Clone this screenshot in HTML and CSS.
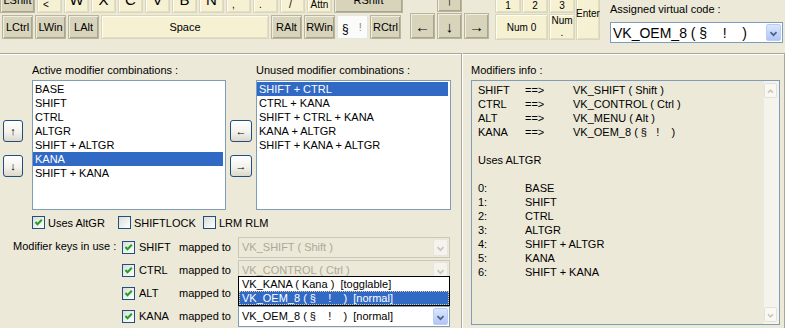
FILE: index.html
```html
<!DOCTYPE html>
<html>
<head>
<meta charset="utf-8">
<title>Modifiers</title>
<link rel="stylesheet" href="styles.css">
</head>
<body>
<div class="top">
  <div class="kb-main">
    <div class="krow r1">
      <div class="key dk w35">LShift</div>
      <div class="key lt sub">&lt;</div>
      <div class="key lt big">W</div>
      <div class="key lt big">X</div>
      <div class="key lt big">C</div>
      <div class="key lt big">V</div>
      <div class="key lt big">B</div>
      <div class="key lt big">N</div>
      <div class="key lt sub">,</div>
      <div class="key lt sub">.</div>
      <div class="key lt sub sub-slash">/</div>
      <div class="key lt sub attn">Attn</div>
      <div class="key dk w69">RShift</div>
    </div>
    <div class="krow r2">
      <div class="key dk w31">LCtrl</div>
      <div class="key dk w31">LWin</div>
      <div class="key dk w31">LAlt</div>
      <div class="key lt w168">Space</div>
      <div class="key dk w31">RAlt</div>
      <div class="key dk w31">RWin</div>
      <div class="key sel w31"><span class="sect">§</span><span class="excl">!</span></div>
      <div class="key dk w31">RCtrl</div>
    </div>
  </div>
  <div class="arrows">
    <div class="arow1"><div class="key dk arrow">↑</div></div>
    <div class="arow2">
      <div class="key dk arrow">←</div>
      <div class="key dk arrow">↓</div>
      <div class="key dk arrow">→</div>
    </div>
  </div>
  <div class="numpad">
    <div class="key lt np np1">1</div>
    <div class="key lt np np2">2</div>
    <div class="key lt np np3">3</div>
    <div class="key lt np enter">Enter</div>
    <div class="key lt np num0">Num 0</div>
    <div class="key lt np numdot"><span>Num</span><span>.</span></div>
  </div>
  <div class="assign">
    <div class="assign-label">Assigned virtual code :</div>
    <div class="combo assign-combo">
      <span class="combo-text">VK_OEM_8 ( §&nbsp;&nbsp;&nbsp;&nbsp;!&nbsp;&nbsp;&nbsp;&nbsp;)</span>
      <span class="combo-btn"><svg width="15" height="17" viewBox="0 0 15 17"><path d="M4 7 L7.5 10.5 L11 7" fill="none" stroke="#4D6185" stroke-width="2"/></svg></span>
    </div>
  </div>
</div>

<div class="panels">
  <div class="left">
    <div class="lists">
      <div class="ud">
        <div class="btn">↑</div>
        <div class="btn">↓</div>
      </div>
      <div class="col col-active">
        <div class="lbl">Active modifier combinations :</div>
        <div class="listbox">
          <div class="item">BASE</div>
          <div class="item">SHIFT</div>
          <div class="item">CTRL</div>
          <div class="item">ALTGR</div>
          <div class="item">SHIFT + ALTGR</div>
          <div class="item selected">KANA</div>
          <div class="item">SHIFT + KANA</div>
        </div>
      </div>
      <div class="lr">
        <div class="btn">←</div>
        <div class="btn">→</div>
      </div>
      <div class="col col-unused">
        <div class="lbl">Unused modifier combinations :</div>
        <div class="listbox">
          <div class="item selected">SHIFT + CTRL</div>
          <div class="item">CTRL + KANA</div>
          <div class="item">SHIFT + CTRL + KANA</div>
          <div class="item">KANA + ALTGR</div>
          <div class="item">SHIFT + KANA + ALTGR</div>
        </div>
      </div>
    </div>

    <div class="checks">
      <div class="chk c1"><span class="cb on"><svg width="11" height="11" viewBox="0 0 11 11"><path d="M2.5 5 L4.5 7.2 L8.8 2.8" fill="none" stroke="#21A121" stroke-width="2"/></svg></span><span>Uses AltGR</span></div>
      <div class="chk c2"><span class="cb"></span><span>SHIFTLOCK</span></div>
      <div class="chk c3"><span class="cb"></span><span>LRM RLM</span></div>
    </div>

    <div class="mods">
      <div class="mods-label">Modifier keys in use :</div>
      <div class="mod-name"><span class="cb on"><svg width="11" height="11" viewBox="0 0 11 11"><path d="M2.5 5 L4.5 7.2 L8.8 2.8" fill="none" stroke="#21A121" stroke-width="2"/></svg></span><span>SHIFT</span></div>
      <div class="mapped">mapped to</div>
      <div class="combo disabled"><span class="combo-text">VK_SHIFT ( Shift )</span><span class="combo-btn"><svg width="15" height="17" viewBox="0 0 15 17"><path d="M4 7 L7.5 10.5 L11 7" fill="none" stroke="#C9C7BA" stroke-width="2"/></svg></span></div>

      <div class="blank"></div>
      <div class="mod-name"><span class="cb on"><svg width="11" height="11" viewBox="0 0 11 11"><path d="M2.5 5 L4.5 7.2 L8.8 2.8" fill="none" stroke="#21A121" stroke-width="2"/></svg></span><span>CTRL</span></div>
      <div class="mapped">mapped to</div>
      <div class="combo disabled"><span class="combo-text">VK_CONTROL ( Ctrl )</span><span class="combo-btn"><svg width="15" height="17" viewBox="0 0 15 17"><path d="M4 7 L7.5 10.5 L11 7" fill="none" stroke="#C9C7BA" stroke-width="2"/></svg></span></div>

      <div class="blank"></div>
      <div class="mod-name"><span class="cb on"><svg width="11" height="11" viewBox="0 0 11 11"><path d="M2.5 5 L4.5 7.2 L8.8 2.8" fill="none" stroke="#21A121" stroke-width="2"/></svg></span><span>ALT</span></div>
      <div class="mapped">mapped to</div>
      <div class="combo"><span class="combo-text"></span><span class="combo-btn"></span></div>

      <div class="blank"></div>
      <div class="mod-name"><span class="cb on"><svg width="11" height="11" viewBox="0 0 11 11"><path d="M2.5 5 L4.5 7.2 L8.8 2.8" fill="none" stroke="#21A121" stroke-width="2"/></svg></span><span>KANA</span></div>
      <div class="mapped">mapped to</div>
      <div class="combo open"><span class="combo-text">VK_OEM_8 ( §&nbsp;&nbsp;&nbsp;&nbsp;!&nbsp;&nbsp;&nbsp;&nbsp;)&nbsp;&nbsp;[normal]</span><span class="combo-btn"><svg width="15" height="17" viewBox="0 0 15 17"><path d="M4 7 L7.5 10.5 L11 7" fill="none" stroke="#4D6185" stroke-width="2"/></svg></span>
        <div class="droplist">
          <div class="ditem">VK_KANA ( Kana )&nbsp;&nbsp;[togglable]</div>
          <div class="ditem dsel">VK_OEM_8 ( §&nbsp;&nbsp;&nbsp;&nbsp;!&nbsp;&nbsp;&nbsp;&nbsp;)&nbsp;&nbsp;[normal]</div>
        </div>
      </div>
    </div>
  </div>

  <div class="right">
    <div class="lbl">Modifiers info :</div>
    <div class="info">
      <div class="info-text">
        <span>SHIFT</span><span>==&gt;</span><span>VK_SHIFT ( Shift )</span>
        <span>CTRL</span><span>==&gt;</span><span>VK_CONTROL ( Ctrl )</span>
        <span>ALT</span><span>==&gt;</span><span>VK_MENU ( Alt )</span>
        <span>KANA</span><span>==&gt;</span><span>VK_OEM_8 ( §&nbsp;&nbsp;&nbsp;!&nbsp;&nbsp;&nbsp;&nbsp;)</span>
        <span class="full">&nbsp;</span>
        <span class="full">Uses ALTGR</span>
        <span class="full">&nbsp;</span>
        <span>0:</span><span class="wide">BASE</span>
        <span>1:</span><span class="wide">SHIFT</span>
        <span>2:</span><span class="wide">CTRL</span>
        <span>3:</span><span class="wide">ALTGR</span>
        <span>4:</span><span class="wide">SHIFT + ALTGR</span>
        <span>5:</span><span class="wide">KANA</span>
        <span>6:</span><span class="wide">SHIFT + KANA</span>
      </div>
      <div class="vscroll">
        <div class="sbtn"><svg width="13" height="15" viewBox="0 0 13 15"><path d="M3.5 9 L6.5 6 L9.5 9" fill="none" stroke="#C9C7BA" stroke-width="2"/></svg></div>
        <div class="strack"></div>
        <div class="sbtn"><svg width="13" height="15" viewBox="0 0 13 15"><path d="M3.5 6 L6.5 9 L9.5 6" fill="none" stroke="#C9C7BA" stroke-width="2"/></svg></div>
      </div>
    </div>
  </div>
</div>
</body>
</html>
```
FILE: styles.css
```css
* { box-sizing: border-box; }
html, body { margin: 0; padding: 0; }
body {
  background: #ECE9D8;
  font-family: "Liberation Sans", Arial, "DejaVu Sans", sans-serif;
  font-size: 11px;
  color: #000;
  width: 785px;
  height: 328px;
  overflow: hidden;
}

/* ---------- keyboard strip ---------- */
.top { display: flex; height: 53px; overflow: hidden; }
.kb-main { display: flex; flex-direction: column; gap: 2px; margin-top: -14px; width: 403px; flex: none; }
.krow { display: flex; gap: 2px; }
.r1 { height: 27px; }
.r2 { height: 24px; margin-left: 2px; }

.key {
  flex: none;
  width: 25px;
  display: flex;
  align-items: center;
  justify-content: center;
  white-space: nowrap;
  font-size: 11px;
}
.dk {
  background: #D8D4BB;
  border: 1px solid #B9B59C;
  box-shadow: inset 1px 1px 0 #EFEDE0, inset -1px -1px 0 #A9A58D;
}
.lt {
  background: #F5F1D2;
  border: 1px solid #DAD6BA;
  box-shadow: inset 1px 1px 0 #FFFDEE, inset -1px -1px 0 #E2DEC2;
}
.sel {
  background: #FBFBF9;
  border: 1px solid #E6E6E2;
  justify-content: flex-start;
  padding-left: 4px;
  gap: 10px;
}
.sel .sect { font-size: 12px; margin-top: 3px; }
.sel .excl { color: #8A8A8A; }
.w35 { width: 35px; }
.w31 { width: 31px; }
.w69 { width: 69px; }
.w168 { width: 168px; }
.big { font-size: 15px; }
.sub { align-items: flex-end; justify-content: flex-start; padding: 0 0 2px 5px; font-size: 10px; }
.sub-slash { padding-left: 8px; }
.attn { justify-content: center; padding-left: 0; padding-bottom: 2px; }

.arrows { display: flex; flex-direction: column; gap: 1px; margin: -14px 0 0 7px; flex: none; }
.arow1 { height: 26px; display: flex; padding-left: 27px; }
.arow2 { height: 26px; display: flex; gap: 2px; }
.arrow { font-size: 15px; }

.numpad {
  display: grid;
  grid-template-columns: 26px 26px 26px 24px;
  grid-template-rows: 27px 26px;
  gap: 1px;
  margin: -14px 0 0 6px;
  flex: none;
}
.np { width: auto; font-size: 10px; }
.np1, .np2, .np3 { align-items: flex-end; padding-bottom: 1px; }
.enter { grid-column: 4; grid-row: 1 / 3; align-items: flex-start; padding-top: 21px; font-size: 10px; }
.num0 { grid-column: 1 / 3; grid-row: 2; }
.numdot { grid-column: 3; grid-row: 2; flex-direction: column; line-height: 12px; }

.assign { margin-left: 10px; width: 173px; padding-top: 3px; flex: none; }
.assign-label { line-height: 13px; }
.assign-combo { margin-top: 6px; font-size: 14px; }
.assign-combo .combo-text { padding-left: 2px; }

/* ---------- combo ---------- */
.combo {
  position: relative;
  height: 21px;
  border: 1px solid #7F9DB9;
  background: #fff;
  display: flex;
  align-items: center;
  justify-content: space-between;
  white-space: nowrap;
}
.combo-text { padding-left: 3px; }
.combo-btn {
  width: 15px;
  height: 17px;
  margin-right: 1px;
  border: 1px solid #BBCDF5;
  border-radius: 2px;
  background: linear-gradient(#DCE6FD, #C1D3FB 60%, #B1C6F6);
  display: flex;
}
.combo.disabled { border-color: #C9C7BA; background: #ECE9D8; color: #ACA899; }
.combo.disabled .combo-btn { border-color: #E8E6DC; background: #F4F3EE; }

.droplist {
  position: absolute;
  left: -1px;
  bottom: calc(100% + 1px);
  width: 212px;
  border: 1px solid #000;
  background: #fff;
  color: #000;
  font-size: 11px;
}
.ditem { height: 14px; line-height: 14px; padding-left: 3px; }
.dsel { background: #316AC5; color: #fff; outline: 1px dotted #E8C896; outline-offset: -1px; }

/* ---------- panels ---------- */
.panels { display: flex; height: 275px; }
.left {
  width: 462px;
  flex: none;
  border-top: 1px solid #ACA899;
  border-right: 1px solid #ACA899;
  box-shadow: inset 0 1px 0 #fff;
}
.right {
  flex: 1;
  border-top: 1px solid #ACA899;
  border-left: 1px solid #fff;
  border-right: 1px solid #ACA899;
  box-shadow: inset 0 1px 0 #fff;
  padding: 10px 0 0 8px;
}

.lbl { line-height: 13px; height: 13px; white-space: nowrap; }

.lists { display: flex; padding: 10px 0 0 3px; }
.ud, .lr { display: flex; flex-direction: column; gap: 13px; padding-top: 56px; }
.ud { width: 20px; }
.lr { width: 22px; margin-left: 4px; }
.col-active { width: 194px; margin-left: 9px; }
.col-unused { width: 195px; margin-left: 4px; }
.listbox {
  margin-top: 3px;
  height: 130px;
  border: 1px solid #7F9DB9;
  background: #fff;
  padding: 1px 2px 1px 0;
}
.item { height: 14px; line-height: 14px; padding-left: 2px; white-space: nowrap; }
.item.selected { background: #316AC5; color: #fff; }

.btn {
  height: 22px;
  border: 1px solid #1F4F7E;
  border-radius: 3px;
  background: linear-gradient(#FFFFFF, #F3F2EC 55%, #DCD8CB);
  display: flex;
  align-items: center;
  justify-content: center;
  font-size: 11px;
}

.checks { display: flex; margin: 6px 0 0 32px; height: 13px; }
.chk { display: flex; align-items: center; gap: 3px; white-space: nowrap; }
.c1 { width: 86px; }
.c2 { width: 85px; }
.cb {
  width: 13px;
  height: 13px;
  flex: none;
  border: 1px solid #1C5180;
  background: linear-gradient(135deg, #DCDCD7, #FFFFFF);
  display: flex;
}

.mods {
  display: grid;
  grid-template-columns: 109px 57px 59px 212px;
  grid-auto-rows: 22px;
  row-gap: 1px;
  margin: 7px 0 0 13px;
  align-items: center;
}
.mods-label { white-space: nowrap; margin-top: -3px; }
.mod-name { display: flex; align-items: center; gap: 4px; }
.mapped { white-space: nowrap; }
.mods .combo { height: 21px; }

/* ---------- info ---------- */
.info {
  margin-top: 3px;
  width: 309px;
  height: 245px;
  border: 1px solid #7F9DB9;
  display: flex;
}
.info-text {
  flex: 1;
  display: grid;
  grid-template-columns: 47px 48px 1fr;
  grid-auto-rows: 14px;
  line-height: 14px;
  padding: 2px 0 0 6px;
  align-content: start;
  white-space: nowrap;
}
.info-text .full { grid-column: 1 / 4; }
.info-text .wide { grid-column: 2 / 4; }
.vscroll { width: 15px; display: flex; flex-direction: column; padding: 2px 1px 2px 0; background: #F4F3EC; }
.sbtn { width: 13px; height: 15px; border: 1px solid #E4E2D6; border-radius: 2px; background: #F9F8F3; display: flex; }
.strack { flex: 1; }
```
